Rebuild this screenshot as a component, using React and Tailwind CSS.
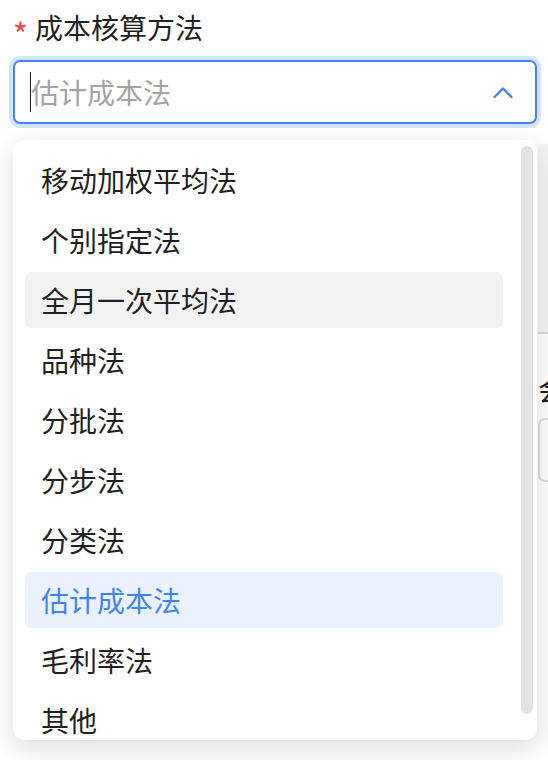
const options = [
  "移动加权平均法",
  "个别指定法",
  "全月一次平均法",
  "品种法",
  "分批法",
  "分步法",
  "分类法",
  "估计成本法",
  "毛利率法",
  "其他",
];

const hovered = "全月一次平均法";
const selected = "估计成本法";

export default function App() {
  return (
    <div
      className="relative w-[548px] h-[760px] overflow-hidden bg-white text-[#1f1f1f]"
      style={{ fontFamily: '"Noto Sans CJK SC", "Noto Sans", sans-serif' }}
    >
      {/* form field */}
      <div className="pt-[9px] pl-[13px]">
        <div className="flex items-center h-[36px] text-[28px] leading-[36px]">
          <span className="text-[#e5484d] w-[22px] text-[32px] leading-none pt-[12px]">*</span>
          <span>成本核算方法</span>
        </div>
        <div className="mt-[15px] w-[524px] h-[64px] rounded-[7px] border-2 border-[#3f84f1] ring-4 ring-[#d3e4fc] flex items-center pl-[15px] pr-[22px]">
          <span className="w-px h-[40px] bg-[#1a1a1a]" />
          <span className="flex-1 text-[28px] text-[#a3a3a3] leading-none">估计成本法</span>
          <svg width="20" height="12" viewBox="0 0 20 12" fill="none">
            <polyline points="1.5,11 10,2.5 18.5,11" stroke="#3f84f1" strokeWidth="2.4" strokeLinecap="round" strokeLinejoin="round" />
          </svg>
        </div>
      </div>

      {/* content behind the menu */}
      <div className="flex mt-[20px]">
        <div className="w-[538px] shrink-0" />
        <div className="w-[524px] shrink-0">
          <div className="h-[190px] bg-[#f4f4f4] border-b-2 border-[#d6d6d6]" />
          <div className="mt-[40px] text-[28px] leading-[30px]">会计期间</div>
          <div className="mt-[14px] h-[64px] rounded-[7px] border-2 border-[#dcdcdc]" />
        </div>
      </div>

      {/* dropdown menu */}
      <div className="absolute left-[13px] top-[140px] w-[524px] h-[600px] rounded-[12px] bg-white overflow-hidden shadow-[0_8px_28px_rgba(0,0,0,0.14)]">
        <div className="flex flex-col gap-[4px] pt-[12px] pl-[12px] w-[490px]">
          {options.map((o) => (
            <div
              key={o}
              className={
                "h-[56px] shrink-0 rounded-[7px] flex items-center px-[16px] text-[28px] leading-none " +
                (o === selected
                  ? "bg-[#ebf1fe] text-[#3f84f1]"
                  : o === hovered
                  ? "bg-[#f2f2f2]"
                  : "")
              }
            >
              {o}
            </div>
          ))}
        </div>
        <div className="absolute right-[4px] top-[6px] w-[12px] h-[568px] rounded-full bg-[#e2e2e2]" />
      </div>
    </div>
  );
}
